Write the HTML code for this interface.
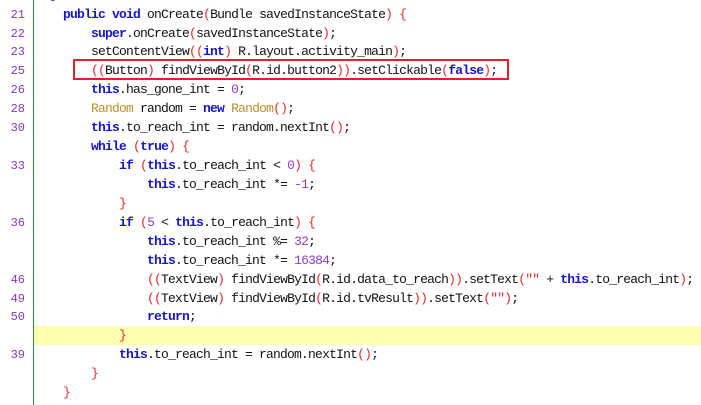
<!DOCTYPE html><html><head><style>
body{margin:0;width:701px;height:405px;overflow:hidden;background:#fff;position:relative;font-family:"Liberation Mono",monospace;font-size:13px;letter-spacing:-0.8px}
.g{position:absolute;left:33px;top:0;width:1px;height:405px;background:#2a8a2a}
.hl{position:absolute;left:34px;top:326px;width:667px;height:19px;background:#ffffb0}
.box{position:absolute;left:73px;top:59px;width:436px;height:21px;border:2px solid #e02030;box-sizing:border-box}
.l{position:absolute;left:0;height:19px;line-height:19px;white-space:pre;color:#111}
.n{display:inline-block;width:25px;text-align:right;color:#7a3cc0;letter-spacing:0;font-size:12px}
.c{position:absolute;left:35px;top:0}
.k{color:#1515c8;font-weight:bold}.p{color:#e82828}.t{color:#b8902a}.m{color:#8a3cd0}.s{color:#e82828}
</style></head><body>
<div class="g"></div><div class="hl"></div>
<div class="l" style="top:-14px"><span class="c">  <span class="k">@Override</span></span></div>
<div class="l" style="top:5px"><span class="n">21</span><span class="c">    <span class="k">public void</span> onCreate<span class="p">(</span>Bundle savedInstanceState<span class="p">)</span> <span class="p">{</span></span></div>
<div class="l" style="top:24px"><span class="n">22</span><span class="c">        <span class="k">super</span>.onCreate<span class="p">(</span>savedInstanceState<span class="p">)</span>;</span></div>
<div class="l" style="top:42px"><span class="n">23</span><span class="c">        setContentView<span class="p">((</span><span class="k">int</span><span class="p">)</span> R.layout.activity_main<span class="p">)</span>;</span></div>
<div class="l" style="top:61px"><span class="n">25</span><span class="c">        <span class="p">((</span>Button<span class="p">)</span> findViewById<span class="p">(</span>R.id.button2<span class="p">))</span>.setClickable<span class="p">(</span><span class="k">false</span><span class="p">)</span>;</span></div>
<div class="l" style="top:80px"><span class="n">26</span><span class="c">        <span class="k">this</span>.has_gone_int = <span class="m">0</span>;</span></div>
<div class="l" style="top:99px"><span class="n">28</span><span class="c">        <span class="t">Random</span> random = <span class="k">new</span> <span class="t">Random</span><span class="p">()</span>;</span></div>
<div class="l" style="top:118px"><span class="n">30</span><span class="c">        <span class="k">this</span>.to_reach_int = random.nextInt<span class="p">()</span>;</span></div>
<div class="l" style="top:137px"><span class="n"></span><span class="c">        <span class="k">while</span> <span class="p">(</span><span class="k">true</span><span class="p">)</span> <span class="p">{</span></span></div>
<div class="l" style="top:156px"><span class="n">33</span><span class="c">            <span class="k">if</span> <span class="p">(</span><span class="k">this</span>.to_reach_int &lt; <span class="m">0</span><span class="p">)</span> <span class="p">{</span></span></div>
<div class="l" style="top:175px"><span class="n"></span><span class="c">                <span class="k">this</span>.to_reach_int *= <span class="m">-1</span>;</span></div>
<div class="l" style="top:194px"><span class="n"></span><span class="c">            <span class="p">}</span></span></div>
<div class="l" style="top:213px"><span class="n">36</span><span class="c">            <span class="k">if</span> <span class="p">(</span><span class="m">5</span> &lt; <span class="k">this</span>.to_reach_int<span class="p">)</span> <span class="p">{</span></span></div>
<div class="l" style="top:232px"><span class="n"></span><span class="c">                <span class="k">this</span>.to_reach_int %= <span class="m">32</span>;</span></div>
<div class="l" style="top:251px"><span class="n"></span><span class="c">                <span class="k">this</span>.to_reach_int *= <span class="m">16384</span>;</span></div>
<div class="l" style="top:270px"><span class="n">46</span><span class="c">                <span class="p">((</span>TextView<span class="p">)</span> findViewById<span class="p">(</span>R.id.data_to_reach<span class="p">))</span>.setText<span class="p">(</span><span class="s">""</span> + <span class="k">this</span>.to_reach_int<span class="p">)</span>;</span></div>
<div class="l" style="top:289px"><span class="n">49</span><span class="c">                <span class="p">((</span>TextView<span class="p">)</span> findViewById<span class="p">(</span>R.id.tvResult<span class="p">))</span>.setText<span class="p">(</span><span class="s">""</span><span class="p">)</span>;</span></div>
<div class="l" style="top:307px"><span class="n">50</span><span class="c">                <span class="k">return</span>;</span></div>
<div class="l" style="top:326px"><span class="n"></span><span class="c">            <span class="p">}</span></span></div>
<div class="l" style="top:345px"><span class="n">39</span><span class="c">            <span class="k">this</span>.to_reach_int = random.nextInt<span class="p">()</span>;</span></div>
<div class="l" style="top:364px"><span class="n"></span><span class="c">        <span class="p">}</span></span></div>
<div class="l" style="top:383px"><span class="n"></span><span class="c">    <span class="p">}</span></span></div>
<div class="box"></div>
</body></html>
